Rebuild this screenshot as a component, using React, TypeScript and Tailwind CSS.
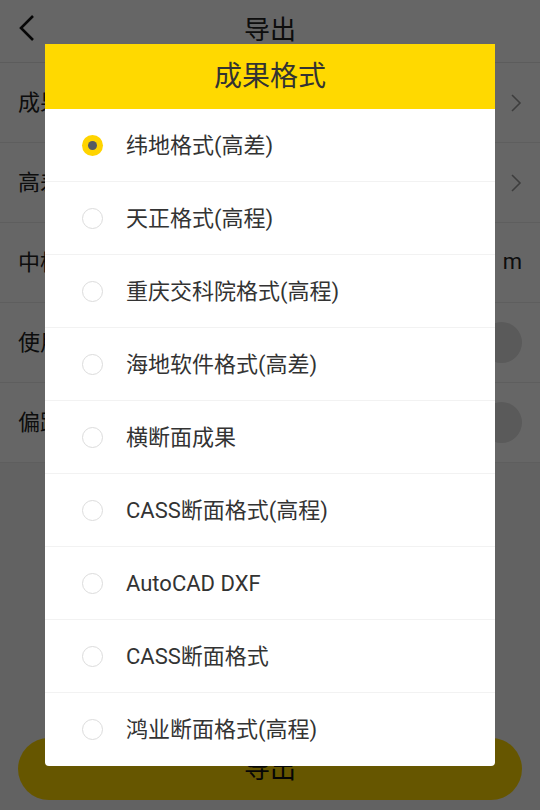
import React from "react";

const font = { fontFamily: 'Roboto, "Noto Sans CJK SC", "Noto Sans", sans-serif' };

const rows = [
  { label: "成果格式", right: "chevron" },
  { label: "高差格式", right: "chevron" },
  { label: "中桩间距", right: "m" },
  { label: "使用偏距", right: "switch" },
  { label: "偏距设置", right: "switch" },
];

const options = [
  "纬地格式(高差)",
  "天正格式(高程)",
  "重庆交科院格式(高程)",
  "海地软件格式(高差)",
  "横断面成果",
  "CASS断面格式(高程)",
  "AutoCAD DXF",
  "CASS断面格式",
  "鸿业断面格式(高程)",
];

function Chevron() {
  return (
    <svg width="12" height="20" viewBox="0 0 12 20" fill="none">
      <path d="M2 2 L10 10 L2 18" stroke="#999" strokeWidth="1.6" />
    </svg>
  );
}

export default function App() {
  return (
    <div className="relative w-[540px] h-[810px] overflow-hidden bg-[#f5f5f5]" style={font}>
      <div className="flex flex-col h-full">
        <div className="relative h-[63px] flex items-center justify-center bg-white border-b border-[#e6e6e6] shrink-0">
          <svg className="absolute left-[16px] top-[12px]" width="22" height="32" viewBox="0 0 22 32" fill="none">
            <path d="M17 4 L5 16 L17 28" stroke="#111" strokeWidth="2.6" />
          </svg>
          <span className="text-[26px] text-[#222] leading-none mt-[-2px]">导出</span>
        </div>
        {rows.map((r) => (
          <div key={r.label} className="h-[80px] flex items-center justify-between pl-[18px] pr-[18px] bg-white border-b border-[#ececec] shrink-0">
            <span className="text-[22px] text-[#222]">{r.label}</span>
            {r.right === "chevron" && <Chevron />}
            {r.right === "m" && <span className="text-[22px] text-[#222] mt-[-2px]">m</span>}
            {r.right === "switch" && (
              <div className="w-[41px] h-[41px] rounded-full bg-[#e0e0e0]" />
            )}
          </div>
        ))}
        <div className="flex-1" />
        <div className="px-[18px] pb-[10px] shrink-0">
          <div className="h-[62px] rounded-full bg-[#ffd700] flex items-center justify-center">
            <span className="text-[26px] text-[#111]">导出</span>
          </div>
        </div>
      </div>

      <div className="absolute inset-0 bg-black/60" />

      <div className="absolute left-[45px] top-[44px] w-[450px] bg-white rounded-b-[4px] overflow-hidden">
        <div className="h-[65px] bg-[#ffd900] flex items-center justify-center">
          <span className="text-[28px] text-[#333]">成果格式</span>
        </div>
        {options.map((o, i) => (
          <div
            key={o}
            className={`h-[73px] flex items-center pl-[37px] ${i < options.length - 1 ? "border-b border-[#f2f2f2]" : ""}`}
          >
            {i === 0 ? (
              <div className="w-[21px] h-[21px] rounded-full bg-[#ffd400] flex items-center justify-center">
                <div className="w-[9px] h-[9px] rounded-full bg-[#555a63]" />
              </div>
            ) : (
              <div className="w-[21px] h-[21px] rounded-full border-[1.5px] border-[#dcdcdc] bg-white" />
            )}
            <span className="ml-[23px] text-[22px] text-[#333]">{o}</span>
          </div>
        ))}
      </div>
    </div>
  );
}
